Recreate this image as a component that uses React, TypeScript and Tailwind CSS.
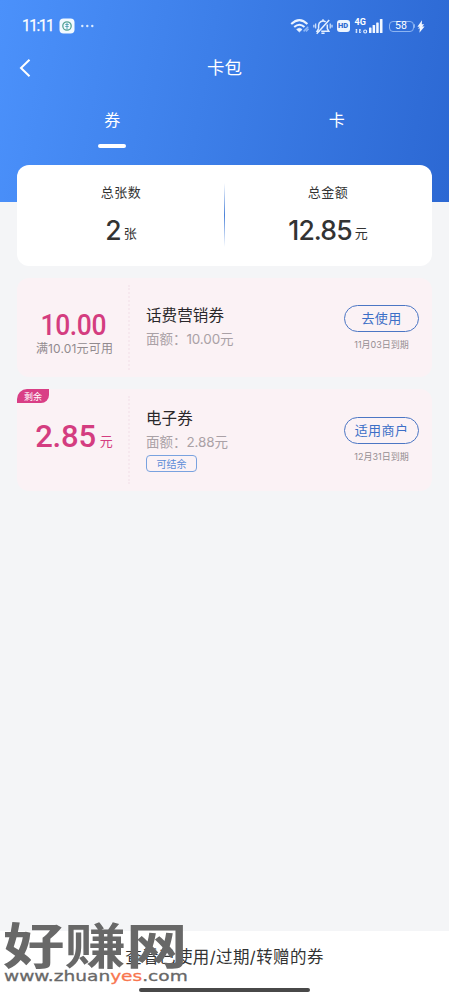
import React, { useState } from "react";
import clsx from "clsx";

interface Coupon {
  id: string;
  amount: string;
  unit?: string;
  condition?: string;
  badge?: string;
  title: string;
  faceValue: string;
  tag?: string;
  action: string;
  expires: string;
}

const coupons: Coupon[] = [
  {
    id: "phone",
    amount: "10.00",
    condition: "满10.01元可用",
    title: "话费营销券",
    faceValue: "10.00元",
    action: "去使用",
    expires: "11月03日到期",
  },
  {
    id: "voucher",
    amount: "2.85",
    unit: "元",
    badge: "剩余",
    title: "电子券",
    faceValue: "2.88元",
    tag: "可结余",
    action: "适用商户",
    expires: "12月31日到期",
  },
];

function StatusBar() {
  return (
    <div className="flex h-[52px] items-center pl-[22px] pr-[24px] text-white">
      <span className="w-[30px] shrink-0 origin-left scale-x-[0.93] whitespace-nowrap font-['Roboto'] text-[16.5px] leading-5 tracking-[-1.5px] [-webkit-text-stroke:0.25px_white]">
        11:11
      </span>
      <svg className="ml-[7px] shrink-0" width="16" height="16" viewBox="0 0 16 16" fill="none">
        <rect x="0.5" y="0.5" width="15" height="15" rx="4" fill="#f2faff" />
        <circle cx="8" cy="8" r="4.2" stroke="#55a392" strokeWidth="1.3" />
        <path d="M6.3 6.5h3.4M6.3 8.5h3.4M8 5v6.5" stroke="#4b9fb0" strokeWidth="0.9" />
      </svg>
      <svg className="ml-[5px] shrink-0" width="15" height="4" viewBox="0 0 15 4" fill="#d9eaff">
        <circle cx="2.3" cy="2" r="1.2" />
        <circle cx="7.3" cy="2" r="1.2" />
        <circle cx="12.3" cy="2" r="1.2" />
      </svg>
      <div className="ml-auto flex shrink-0 items-center">
        {/* wifi */}
        <svg className="shrink-0" width="20" height="16" viewBox="0 0 20 16" fill="none" stroke="#eaf3ff">
          <path d="M1.2 6Q9.4-1.8 17.4 6" strokeWidth="2" />
          <path d="M4.2 9Q9.4 4.4 14.5 9" strokeWidth="2" />
          <path d="M6.6 11.4Q9.4 9 12.1 11.4L9.4 14z" fill="#eaf3ff" strokeWidth="0.6" />
          <path d="M13.6 13.4l4.6-4.6M16 13.6l2.6-2.8" stroke="#8db7f7" strokeWidth="1.5" />
        </svg>
        {/* muted bell */}
        <svg className="ml-[3px] shrink-0" width="20" height="17" viewBox="0 0 20 17" fill="none" stroke="#e3efff" strokeWidth="1.5">
          <path d="M5.6 10.6V7.5a4.4 4.4 0 0 1 7-3.6M14.3 6.5v4.2l1.5 2.5H8.2M6.5 13.2H4.1l1.5-2.6" />
          <path d="M8.4 15.2h3.2M3.7 15.7L16.2 2M10 3V1.3" />
          <path d="M2.7 5.5v5M.9 6.8v2.7M17.2 5.5v5M19 6.8v2.7" strokeWidth="1.1" />
        </svg>
        <span className="ml-[4px] flex h-[12px] w-[13px] shrink-0 items-center justify-center rounded-[3px] bg-[#edf5ff] font-['Roboto'] text-[7.5px] font-black leading-none text-[#2f6bd2]">
          HD
        </span>
        <div className="ml-[5px] flex h-[16px] w-[14px] shrink-0 flex-col justify-between">
          <span className="font-['Roboto'] text-[9px] font-bold leading-[9px]">4G</span>
          <svg className="shrink-0" width="13" height="6" viewBox="0 0 13 6" fill="none" stroke="#e5f0ff">
            <path d="M1.7 5V1M.4 2.3L1.7 1M4.7 1v4M6 3.7L4.7 5M.4 4h1.3M4.7 2H6" strokeWidth="1" />
            <circle cx="10.2" cy="3.5" r="1.5" strokeWidth="1.1" />
          </svg>
        </div>
        <svg className="shrink-0" width="14" height="15" viewBox="0 0 14 15" fill="#f3f8ff">
          <rect x="0" y="8.5" width="2.5" height="5.5" rx="0.6" />
          <rect x="3.6" y="6" width="2.5" height="8" rx="0.6" />
          <rect x="7.2" y="3.5" width="2.5" height="10.5" rx="0.6" />
          <rect x="10.9" y="0" width="2.6" height="14" rx="0.6" />
        </svg>
        <div className="ml-[6px] flex h-[11px] w-[25px] shrink-0 items-center justify-center rounded-[4px] border border-[#8cb4f2] font-['Roboto'] text-[10.5px] leading-none">
          58
        </div>
        <span className="h-[4px] w-[1.5px] rounded-r bg-[#8cb4f2]" />
        <svg className="ml-[2px] shrink-0" width="8" height="13" viewBox="0 0 8 13" fill="#f3f8ff">
          <path d="M5 .3L.4 6.8h2.5L.8 8.6h2.1L2.4 12.8 7.6 6.4H5.2l2-2.1H4.8z" />
        </svg>
      </div>
    </div>
  );
}

function CouponCard({ coupon }: { coupon: Coupon }) {
  return (
    <div
      className={clsx(
        "relative flex rounded-[12px] bg-[#fbf2f5]",
        coupon.badge ? "h-[102px]" : "h-[99px]"
      )}
    >
      {coupon.badge && (
        <span className="absolute left-0 top-0 flex h-[14px] w-[32px] items-center justify-center rounded-br-[8px] rounded-tl-[10px] bg-[#d93f86] text-[9px] leading-none text-white">
          {coupon.badge}
        </span>
      )}
      <div className={clsx("flex w-[111px] flex-col items-center", coupon.badge ? "pt-[31px]" : "pt-[30px]")}>
        <div className="ml-[3px] flex items-baseline text-[#d43d80]">
          {coupon.unit ? (
            <span className="font-['Roboto'] text-[31px] font-medium leading-[33px] tracking-[-0.2px]">{coupon.amount}</span>
          ) : (
            <span className="-ml-[6px] -mr-[4px] scale-x-[0.88] font-['Roboto'] text-[30px] font-medium leading-[33px] tracking-[-0.4px]">
              {coupon.amount}
            </span>
          )}
          {coupon.unit && <span className="relative -top-px ml-[4px] text-[13px] leading-none">{coupon.unit}</span>}
        </div>
        {coupon.condition && (
          <span className="ml-[4px] mt-[-1px] whitespace-nowrap text-[12px] leading-[17px] tracking-[0.15px] text-[#918a8e]">{coupon.condition}</span>
        )}
      </div>
      <div className="my-[7px] border-l-2 border-dotted border-[#f6e8ee]" />
      <div className={clsx("flex flex-1 flex-col items-start pl-[16px]", coupon.badge ? "pt-[19px]" : "pt-[27px]")}>
        <h3 className="whitespace-nowrap text-[15.5px] leading-[22px] tracking-[0.1px] text-[#29272a]">{coupon.title}</h3>
        <p className="mt-px whitespace-nowrap text-[13.5px] leading-[22px] text-[#aaa1a6]">
          面额：<span className="tracking-[-0.15px]">{coupon.faceValue}</span>
        </p>
        {coupon.tag && (
          <span className="mt-[2px] flex h-[17px] w-[51px] items-center justify-center rounded-[4px] border border-[#79a2df] text-[10px] leading-none text-[#5a8bd7]">
            {coupon.tag}
          </span>
        )}
      </div>
      <div className={clsx("mr-[13px] flex w-[75px] flex-col items-center", coupon.badge ? "pt-[28px]" : "pt-[27px]")}>
        <button className="flex h-[27px] w-full items-center justify-center rounded-full border-[1.5px] border-[#4b76c4] text-[13px] leading-none tracking-[0.4px] text-[#3c6fc7]">
          {coupon.action}
        </button>
        <span className="mt-[6px] whitespace-nowrap text-[9px] leading-[14px] text-[#958e92]">{coupon.expires}</span>
      </div>
    </div>
  );
}

function Watermark() {
  return (
    <div className="pointer-events-none absolute bottom-0 left-0 h-[80px] w-[200px] text-[#686868]">
      <div className="absolute left-[3px] top-[3px] origin-top-left scale-y-[0.79] whitespace-nowrap text-[61.5px] font-bold leading-[60px]">
        好赚网
      </div>
      <div className="absolute left-[4px] top-[48px] origin-left scale-x-[1.28] whitespace-nowrap font-['DejaVu_Sans'] text-[14.5px] leading-[16px] [-webkit-text-stroke:0.3px_currentColor]">
        www.zhuan<span className="text-[#f8764f]">yes</span>.com
      </div>
    </div>
  );
}

export default function App() {
  const [tab, setTab] = useState("券");

  return (
    <div className="relative flex h-[1000px] w-[449px] flex-col overflow-hidden bg-[#f4f5f7] font-['Inter','Noto_Sans_CJK_SC',sans-serif]">
      <header className="h-[202px] shrink-0 bg-linear-[100deg,#4b91fb_0%,#3d7fe9_45%,#2c68d3_100%] text-white">
        <StatusBar />
        <div className="grid h-[32px] grid-cols-[60px_1fr_60px] items-center">
          <svg className="ml-[19px]" width="12" height="20" viewBox="0 0 12 20" fill="none" stroke="currentColor" strokeWidth="2">
            <path d="M10.5 1.8L2 10l8.5 8.3" />
          </svg>
          <h1 className="text-center text-[17.5px] leading-none">卡包</h1>
        </div>
        <div className="grid grid-cols-2 pt-[24px]">
          {["券", "卡"].map((name) => (
            <button key={name} onClick={() => setTab(name)} className="flex flex-col items-center">
              <span className="text-[16px] leading-[24px]">{name}</span>
              <span className={clsx("mt-[12px] h-[4px] w-[28px] rounded-full", tab === name && "bg-white")} />
            </button>
          ))}
        </div>
      </header>

      <main className="relative -mt-[37px] flex flex-1 flex-col px-[17px]">
        <section className="flex h-[101px] shrink-0 rounded-[12px] bg-white text-[#333]">
          <div className="flex w-[207px] flex-col items-center pl-px pt-[17px]">
            <span className="text-[13px] leading-[20px] tracking-[0.5px]">总张数</span>
            <div className="mt-[10px] flex items-baseline">
              <span className="text-[26.5px] font-medium leading-[36px] tracking-[-0.8px]">2</span>
              <span className="relative -top-[2px] ml-[3px] text-[13px] leading-none">张</span>
            </div>
          </div>
          <div className="mt-[18px] h-[64px] w-px bg-linear-to-b from-[#4b82d900] via-[#4b82d9] to-[#4b82d900]" />
          <div className="flex flex-1 flex-col items-center pr-px pt-[17px]">
            <span className="text-[13px] leading-[20px] tracking-[0.5px]">总金额</span>
            <div className="mt-[10px] flex items-baseline">
              <span className="text-[26.5px] font-medium leading-[36px] tracking-[-0.9px]">12.85</span>
              <span className="relative -top-[2px] ml-[3px] text-[13px] leading-none">元</span>
            </div>
          </div>
        </section>

        <div className="mt-[12px] flex flex-col gap-[12px]">
          {coupons.map((coupon) => (
            <CouponCard key={coupon.id} coupon={coupon} />
          ))}
        </div>
      </main>

      <footer className="flex h-[69px] shrink-0 flex-col items-center bg-white">
        <span className="mt-[14px] whitespace-nowrap text-[16.5px] leading-[24px] tracking-[0.4px] text-[#333]">查看已使用/过期/转赠的券</span>
        <span className="mt-[19px] h-[4px] w-[171px] rounded-full bg-[#484848]" />
      </footer>
      <Watermark />
    </div>
  );
}
